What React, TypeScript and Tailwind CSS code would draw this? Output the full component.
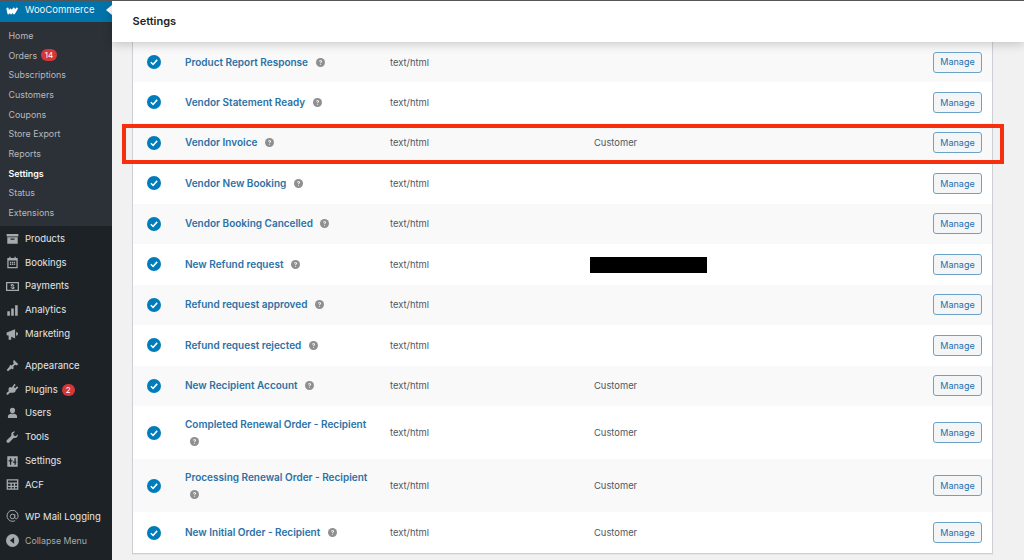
const font = { fontFamily: "Inter, 'Liberation Sans', sans-serif" };

const subItems = ["Home", "Orders", "Subscriptions", "Customers", "Coupons", "Store Export", "Reports", "Settings", "Status", "Extensions"];

function Icon({ children }: { children: React.ReactNode }) {
  return (
    <svg viewBox="0 0 20 20" className="h-[13px] w-[13px] shrink-0" fill="#a7aaad">
      {children}
    </svg>
  );
}

const icons: Record<string, React.ReactNode> = {
  Products: <path d="M1 3h18v4H1zM2 8h16v10H2zM7 10v2h6v-2z" fillRule="evenodd" />,
  Bookings: <path d="M5 1h2v2h6V1h2v2h3v16H2V3h3zM4 7v10h12V7zM6 9h2v2H6zM9 9h2v2H9zM12 9h2v2h-2zM6 12h2v2H6zM9 12h2v2H9zM12 12h2v2h-2z" fillRule="evenodd" />,
  Payments: <path d="M0 3h20v14H0zM2 5v10h16V5zM9.200 6h1.600v1.100c1 .1 1.800.5 2.200 1l-1 1c-.4-.4-1-.7-1.800-.7-.7 0-1.100.2-1.100.6 0 1.100 4.100.4 4.100 3 0 1.100-.9 1.800-2.400 2V14H9.200v-1c-1.100-.1-2-.6-2.500-1.200l1-1c.5.500 1.200.9 2 .9.800 0 1.300-.2 1.300-.7 0-1.100-4-.4-4-3 0-1 .9-1.800 2.200-1.900z" fillRule="evenodd" />,
  Analytics: <path d="M2 11h4v7H2zM8 7h4v11H8zM14 2h4v16h-4z" />,
  Marketing: <path d="M1 7l13-5v14L8 13.500V18H4v-6.500L1 11zM15.500 6a3 3 0 010 6z" />,
  Appearance: <path d="M12 1l7 7-3 2-2-1-3 3 1 2-2 2-5-5 2-2 2 1 3-3-1-2zM5.500 11.500l3 3L3 19l-2-2z" />,
  Plugins: <path d="M13 1l2 2-3 3 2 2 3-3 2 2-4 4-1 3-3 1H6l-3 3H1v-3l3-2V8l2-2 3 1z" />,
  Users: <path d="M10 1a4 4 0 014 4c0 2.500-1.700 5-4 5S6 7.500 6 5a4 4 0 014-4zM3 17v-3c0-2 3-3 4.500-3.500 1.500 1 3.500 1 5 0C14 11 17 12 17 14v3z" />,
  Tools: <path d="M18 5l-3 3-3-1-1-3 3-3c-3-.5-6 1-6 4.500 0 .8.100 1.300.3 1.800L1.500 14c-1 1-1 2.500 0 3.500s2.500 1 3.500 0l6.700-6.800c3.800 1.200 7.300-2 6.300-5.700z" />,
  Settings: <path d="M2 2h16v16H2zM6 5v3H4v2h2v5h2v-5h2V8H8V5zM13 5v5h-2v2h2v3h2v-3h1v-2h-1V5z" fillRule="evenodd" />,
  ACF: <path d="M1 2h18v16H1zM3 4v3h14V4zM3 9v3h4V9zM9 9v3h3V9zM14 9v3h3V9zM3 14v2h4v-2zM9 14v2h3v-2zM14 14v2h3v-2z" fillRule="evenodd" />,
  "WP Mail Logging": (
    <g fill="none" stroke="#a7aaad" strokeWidth="1.500">
      <path d="M14 16.500A8.500 8.500 0 1118.500 10c0 2-1 3.500-2.500 3.500s-2.500-1-2.500-2.500V6.500" />
      <circle cx="10" cy="10" r="3.500" />
    </g>
  ),
};

const groups = [
  ["Products", "Bookings", "Payments", "Analytics", "Marketing"],
  ["Appearance", "Plugins", "Users", "Tools", "Settings", "ACF"],
];

function Badge({ n }: { n: string }) {
  return (
    <span className="ml-[4px] flex h-[12px] min-w-[13px] items-center justify-center rounded-full bg-[#d63638] px-[3.500px] text-[8px] text-white">
      {n}
    </span>
  );
}

function MainItem({ name }: { name: string }) {
  return (
    <div className="flex h-[23.800px] items-center pl-[6px] text-[9.500px] text-[#e4e6e8]">
      <span className="flex w-[19px] shrink-0">
        <Icon>{icons[name]}</Icon>
      </span>
      {name}
      {name === "Plugins" && <Badge n="2" />}
    </div>
  );
}

function Sidebar() {
  return (
    <aside className="flex h-full w-[112px] shrink-0 flex-col bg-[#1d2227]">
      <div className="relative flex h-[21px] shrink-0 items-center bg-[#0073aa] pb-[2px] pl-[6px] text-[9.500px] text-[#f0f6fc]">
        <svg viewBox="0 0 26 14" className="mr-[6px] h-[10px] w-[13px]">
          <path d="M3 2.500l2 9 4-7 1.500 7 5-9 .5 9 5.500-9" fill="none" stroke="#fff" strokeWidth="4.500" strokeLinejoin="round" strokeLinecap="round" />
        </svg>
        WooCommerce
        <span className="absolute right-0 top-[4px] h-0 w-0 border-y-[5.500px] border-r-[6px] border-y-transparent border-r-white" />
      </div>
      <div className="flex h-[204px] shrink-0 flex-col bg-[#2c3138] pt-[4px]">
        {subItems.map((item) => (
          <div
            key={item}
            className={`flex h-[19.670px] items-center pl-[8.500px] text-[8.900px] ${item === "Settings" ? "font-semibold text-white" : "text-[#b4b9be]"}`}
          >
            {item}
            {item === "Orders" && <Badge n="14" />}
          </div>
        ))}
      </div>
      <div className="flex flex-col pt-[1px]">
        {groups[0].map((name) => (
          <MainItem key={name} name={name} />
        ))}
      </div>
      <div className="mt-[8px] flex flex-col">
        {groups[1].map((name) => (
          <MainItem key={name + "-m"} name={name} />
        ))}
      </div>
      <div className="mt-[8px]">
        <MainItem name="WP Mail Logging" />
      </div>
      <div className="flex h-[23.800px] items-center pl-[6px] text-[8.800px] text-[#a7aaad]">
        <span className="flex w-[19px] shrink-0">
          <Icon>
            <path d="M10 0a10 10 0 110 20 10 10 0 010-20zM12.500 5L6 10l6.500 5z" fillRule="evenodd" />
          </Icon>
        </span>
        Collapse Menu
      </div>
    </aside>
  );
}

type Row = { title: string; to?: string; h: number; hidden?: boolean };

const rows: Row[] = [
  { title: "Product Report Response", h: 40.200 },
  { title: "Vendor Statement Ready", h: 40.500 },
  { title: "Vendor Invoice", to: "Customer", h: 40.500 },
  { title: "Vendor New Booking", h: 40.500 },
  { title: "Vendor Booking Cancelled", h: 40.500 },
  { title: "New Refund request", hidden: true, h: 40.500 },
  { title: "Refund request approved", h: 40.500 },
  { title: "Refund request rejected", h: 40.500 },
  { title: "New Recipient Account", to: "Customer", h: 40.300 },
  { title: "Completed Renewal Order - Recipient", to: "Customer", h: 53.500 },
  { title: "Processing Renewal Order - Recipient", to: "Customer", h: 53 },
  { title: "New Initial Order - Recipient", to: "Customer", h: 41 },
];

function Help() {
  return (
    <svg viewBox="0 0 20 20" className="ml-[5px] inline-block h-[9px] w-[9px] align-[-1px]">
      <circle cx="10" cy="10" r="10" fill="#8f8f8f" />
      <path d="M6.800 7.800C7 5.900 8.300 5 10.100 5c1.900 0 3.200 1.100 3.200 2.700 0 2.300-2.500 2.300-2.500 4.100H9c0-2.800 2.300-2.800 2.300-4 0-.7-.5-1.100-1.200-1.100-.8 0-1.300.4-1.400 1.100zM9 13.200h1.900V15H9z" fill="#fff" />
    </svg>
  );
}

function EmailRow({ row, index }: { row: Row; index: number }) {
  return (
    <div
      className={`flex items-center ${index % 2 === 0 ? "bg-[#f9f9f9]" : "bg-white"}`}
      style={{ height: row.h }}
    >
      <div className="flex w-[52px] shrink-0 pl-[14px]">
        <svg viewBox="0 0 20 20" className="h-[14px] w-[14px]">
          <circle cx="10" cy="10" r="10" fill="#007cba" />
          <path d="M5.500 10.300l3.200 3.200 5.800-6.500" fill="none" stroke="#fff" strokeWidth="2.300" />
        </svg>
      </div>
      <div className="w-[205px] shrink-0 pr-[12px] text-[10px] font-semibold leading-[17px] text-[#2b71a6]">
        {row.title} <Help />
      </div>
      <div className="w-[204px] shrink-0 pt-[1px] text-[9.400px] text-[#50575e]">text/html</div>
      <div className="flex-1 pt-[1px] text-[9.400px] text-[#50575e]">
        {row.to}
        {row.hidden && <div className="-ml-[4px] h-[16px] w-[117px] bg-black" />}
      </div>
      <div className="flex pr-[10px]">
        <button className="h-[21px] w-[49px] rounded-[3px] border border-[#6ba3c8] bg-[#f3f5f6] text-[9px] text-[#2271b1]">
          Manage
        </button>
      </div>
    </div>
  );
}

export default function App() {
  return (
    <div className="relative flex h-[560px] w-[1024px] overflow-hidden border-t border-[#555] bg-[#f1f1f1]" style={font}>
      <Sidebar />
      <main className="flex min-w-0 flex-1 flex-col">
        <header className="relative z-10 flex h-[41px] shrink-0 items-center bg-white pl-[20.500px] text-[11px] font-semibold text-[#1d2327] shadow-[0_2px_10px_rgba(0,0,0,0.2)]">
          Settings
        </header>
        <div className="pl-[20px] pr-[31px]">
          <div className="border-x border-b border-[#ccd0d4] shadow-[0_1px_1px_rgba(0,0,0,0.04)]">
            {rows.map((row, i) => (
              <EmailRow key={row.title} row={row} index={i} />
            ))}
          </div>
        </div>
      </main>
      <div className="pointer-events-none absolute left-[122px] top-[123px] z-20 h-[40px] w-[882px] border-4 border-[#f6300f]" />
    </div>
  );
}
